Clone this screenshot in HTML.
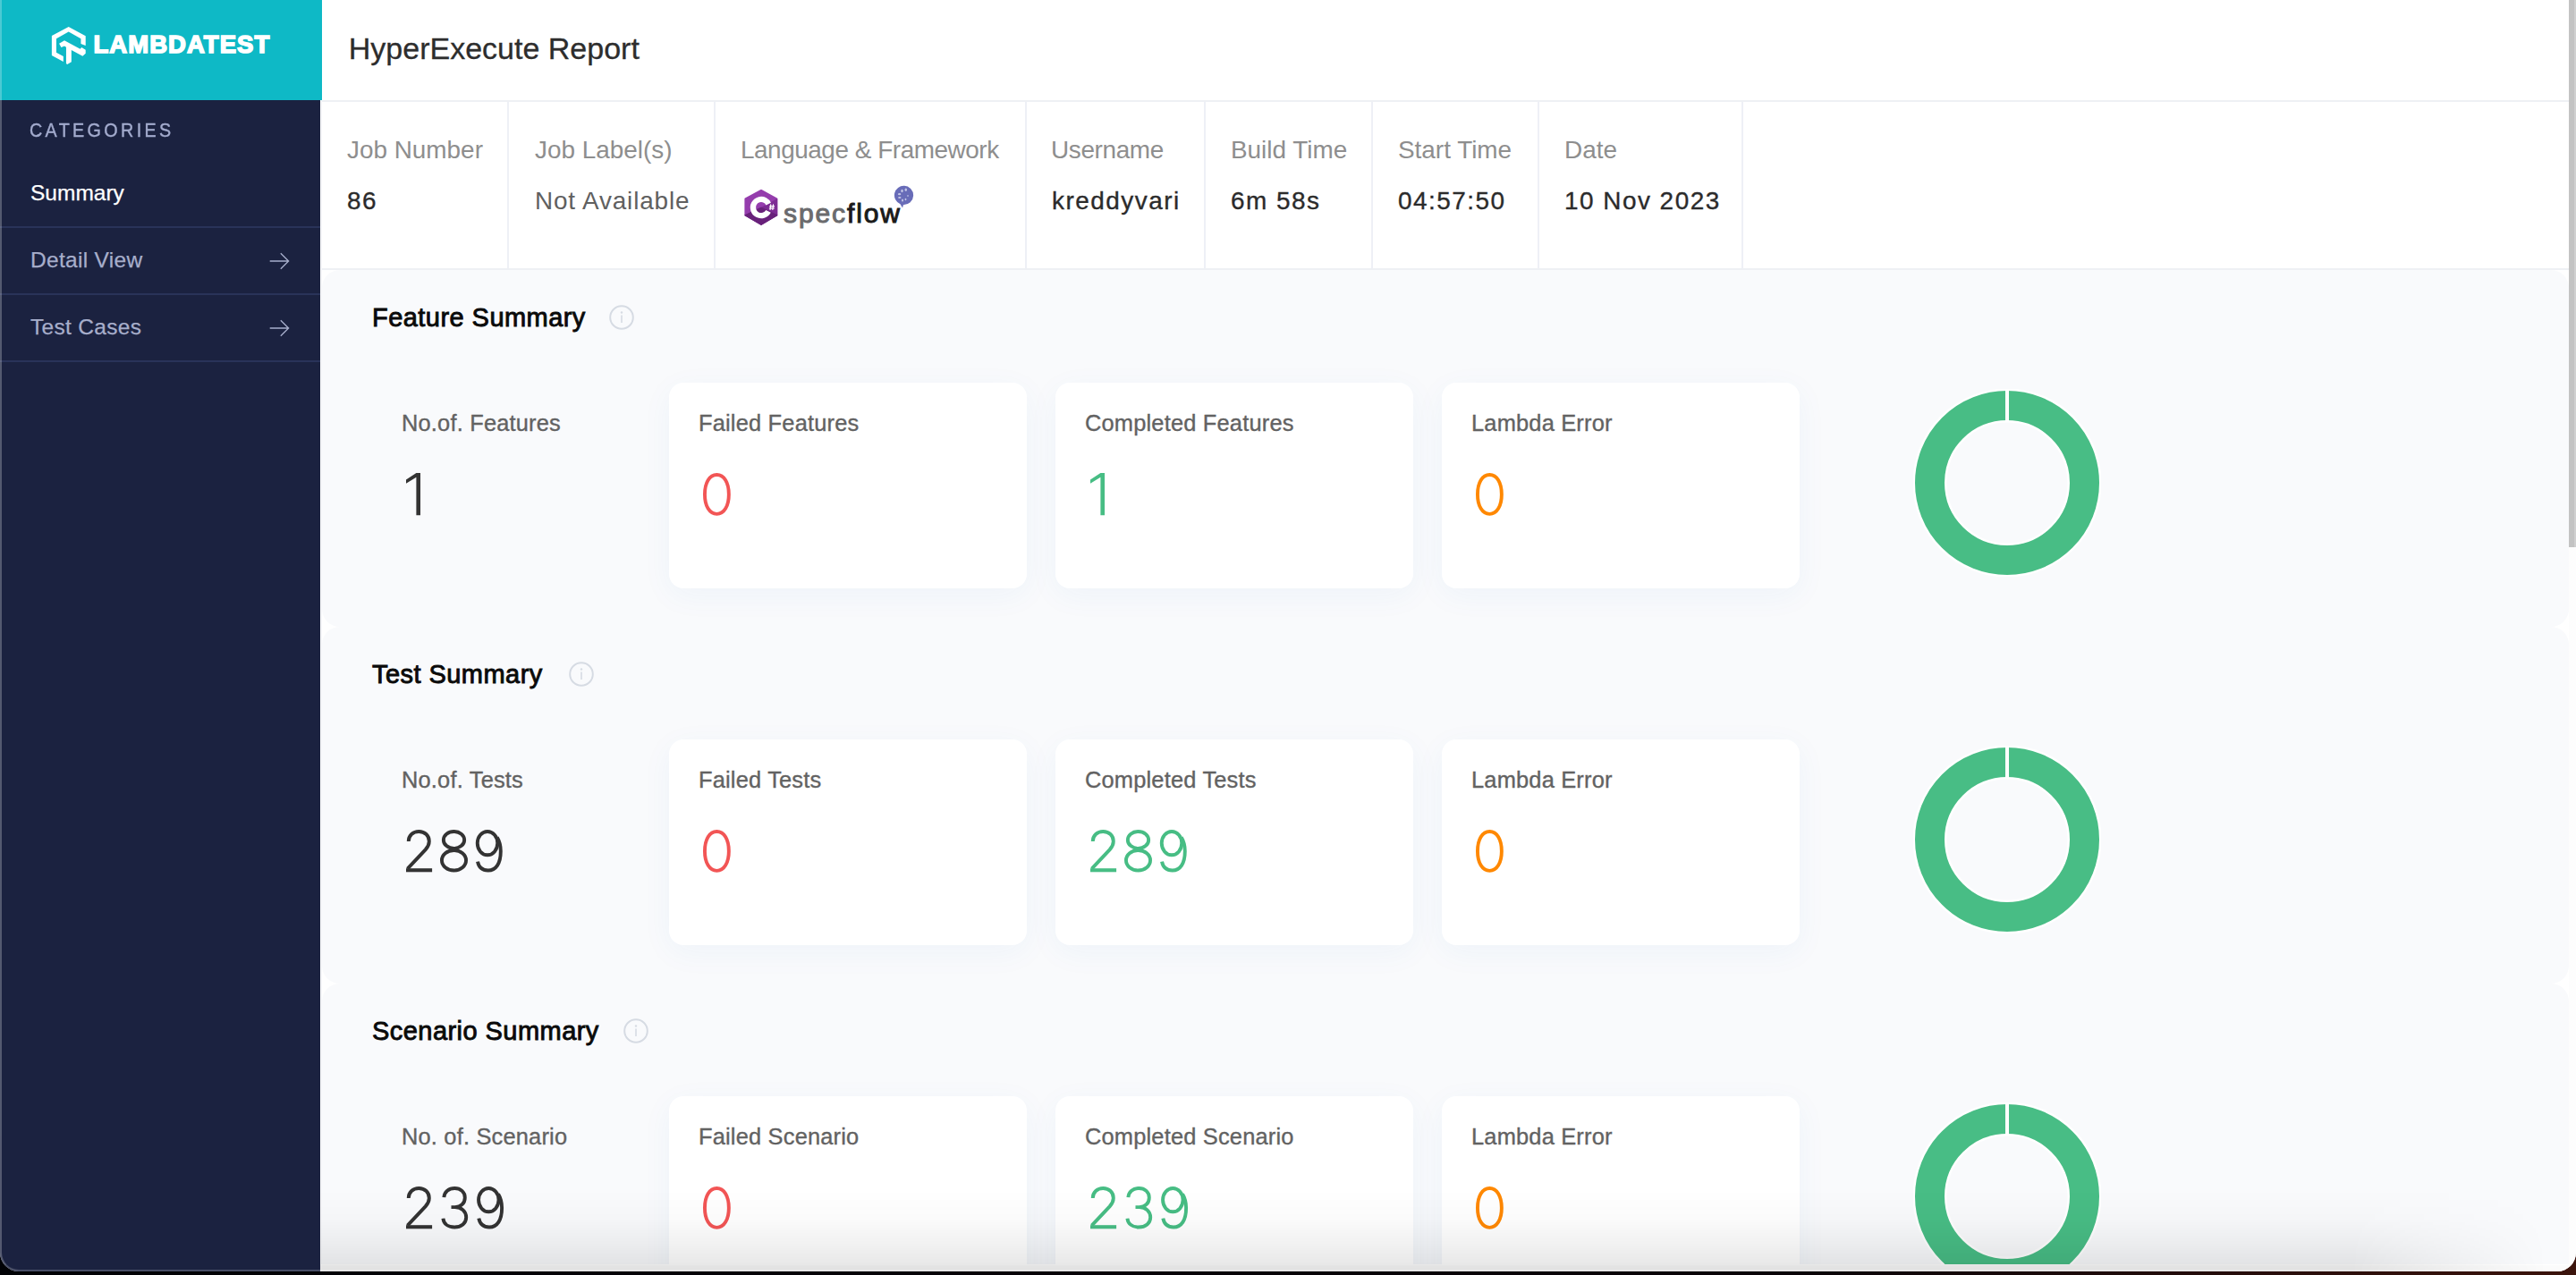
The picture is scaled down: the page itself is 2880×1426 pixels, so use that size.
<!DOCTYPE html>
<html><head><meta charset="utf-8">
<style>
*{margin:0;padding:0;box-sizing:border-box}
html,body{width:2880px;height:1426px;overflow:hidden;background:linear-gradient(to right,#020306 0%,#0a0408 70%,#3c140c 100%);font-family:"Liberation Sans",sans-serif}
.win{position:absolute;left:0;top:0;width:2880px;height:1422px;border-radius:0 0 21px 21px;overflow:hidden;background:#fff}
.abs{position:absolute;white-space:nowrap}
.teal{position:absolute;left:0;top:0;width:360px;height:112px;background:#0eb9c6;z-index:2}
.side{position:absolute;left:0;top:112px;width:358px;height:1310px;background:#1b2240}
.sline{position:absolute;left:0;width:358px;height:2px;background:#293359}
.main{position:absolute;left:358px;top:0;width:2514px;height:1414px;overflow:hidden;background:#fff}
.hdrline{position:absolute;left:2px;top:112px;width:2512px;height:2px;background:#eef0f4}
.infoline{position:absolute;left:2px;top:300px;width:2512px;height:2px;background:#eef0f4}
.vsep{position:absolute;top:114px;width:2px;height:186px;background:#eef0f6}
.lbl{position:absolute;margin-top:1px;font-size:27.9px;line-height:27.9px;color:#8e8e8e;white-space:nowrap}
.val{position:absolute;margin-top:1.2px;letter-spacing:1.5px;font-size:27.9px;line-height:27.9px;color:#2b2b2b;white-space:nowrap;-webkit-text-stroke:0.35px #2b2b2b}
.panel{position:absolute;left:2px;width:2512px;height:399px;background:#f9fafc;border-radius:20px}
.h2{position:absolute;font-size:29px;line-height:29px;letter-spacing:0.45px;font-weight:400;-webkit-text-stroke:0.9px #0a0a0a;color:#0a0a0a;white-space:nowrap}
.info{position:absolute;width:28px;height:28px}
.card{position:absolute;width:400px;height:230px;background:#fff;border-radius:16px;box-shadow:0 8px 34px rgba(40,120,200,0.05)}
.clbl{position:absolute;font-size:25.4px;line-height:25.4px;color:#626262;white-space:nowrap;letter-spacing:0.2px;-webkit-text-stroke:0.35px #626262}
.num{position:absolute;font-size:68px;line-height:68px;white-space:nowrap;letter-spacing:1.5px}
.donut{position:absolute;width:210px;height:210px}
.shade{position:absolute;left:0;top:1340px;width:2514px;height:74px;background:linear-gradient(rgba(0,0,0,0),rgba(0,0,0,0.085))}
</style></head><body>
<div class="win">
  <!-- sidebar -->
  <div class="teal"></div>
  <svg class="abs" style="left:52px;top:26px;z-index:3" width="50" height="50" viewBox="0 0 1275 1275">
    <path fill="#fff" d="M630 100 L1115 365 L1115 635 L980 585 L980 440 L630 245 L280 440 L280 835 L480 945 L480 1095 L150 920 L150 360 Z"/>
    <path fill="#fff" d="M360 580 L510 490 L960 730 L1000 690 L1115 760 L1115 860 L1030 935 L710 765 L710 1100 L590 1170 L560 1150 L560 680 L510 650 L420 690 Z"/>
  </svg>
  <div class="abs" id="logo" style="z-index:3;left:104.5px;top:36px;font-size:27.5px;line-height:27.5px;font-weight:700;color:#fff;letter-spacing:1.04px;-webkit-text-stroke:1.6px #fff">LAMBDATEST</div>
  <div class="side">
    <div class="abs" style="left:33px;top:22.8px;font-size:21.7px;line-height:21.7px;color:#a3abcd;letter-spacing:3.69px;transform:scaleX(0.91);transform-origin:0 0;-webkit-text-stroke:0.4px #a3abcd">CATEGORIES</div>
    <div class="abs" style="left:34px;top:92px;font-size:24.5px;line-height:24px;color:#ffffff;-webkit-text-stroke:0.25px #fff">Summary</div>
    <div class="sline" style="top:141px"></div>
    <div class="abs" style="left:34px;top:167px;font-size:24.5px;line-height:24px;color:#a7aecb;letter-spacing:0.3px;-webkit-text-stroke:0.25px #a7aecb">Detail View</div>
    <svg class="abs" style="left:300px;top:169.4px" width="26" height="22" viewBox="0 0 26 22"><path d="M1.7 11 H22.6 M13.8 2.3 L22.6 11 L13.8 19.7" fill="none" stroke="#a7aecb" stroke-width="1.35"/></svg>
    <div class="sline" style="top:216px"></div>
    <div class="abs" style="left:34px;top:242px;font-size:24.5px;line-height:24px;color:#a7aecb;letter-spacing:0.3px;-webkit-text-stroke:0.25px #a7aecb">Test Cases</div>
    <svg class="abs" style="left:300px;top:243.9px" width="26" height="22" viewBox="0 0 26 22"><path d="M1.7 11 H22.6 M13.8 2.3 L22.6 11 L13.8 19.7" fill="none" stroke="#a7aecb" stroke-width="1.35"/></svg>
    <div class="sline" style="top:291px"></div>
  </div>

  <!-- main -->
  <div class="main">
    <div class="abs" style="left:1px;top:112px;width:1px;height:1302px;background:#f1f2f6"></div>
    <div class="abs" id="title" style="left:31.8px;top:37.1px;font-size:34px;line-height:34px;color:#2d2d2d;-webkit-text-stroke:0.3px #2d2d2d">HyperExecute Report</div>
    <div class="hdrline"></div>
    <div class="infoline"></div>
    <div class="vsep" style="left:209px"></div>
    <div class="vsep" style="left:440px"></div>
    <div class="vsep" style="left:788px"></div>
    <div class="vsep" style="left:988px"></div>
    <div class="vsep" style="left:1175px"></div>
    <div class="vsep" style="left:1361px"></div>
    <div class="vsep" style="left:1589px"></div>

    <div class="lbl" style="left:30px;top:153.4px">Job Number</div>
    <div class="val" style="left:30px;top:210.1px">86</div>
    <div class="lbl" style="left:240px;top:153.4px">Job Label(s)</div>
    <div class="val" style="left:240px;top:210.1px;color:#606060;-webkit-text-stroke:0;letter-spacing:0.85px">Not Available</div>
    <div class="lbl" style="left:470px;top:153.4px;letter-spacing:-0.45px">Language &amp; Framework</div>
    <!-- csharp + specflow logo -->
    <svg class="abs" style="left:470px;top:208px" width="46" height="48" viewBox="0 0 46 48">
      <path d="M23 5 L40.3 14.4 L40.3 32.3 L23 42.7 L5.4 32.3 L5.4 14.4 Z" fill="#953dad" stroke="#953dad" stroke-width="2" stroke-linejoin="round"/>
      <path d="M23 24.1 L41.2 14 L41.2 32.8 Z" fill="#7d2c93"/>
      <path d="M4.6 32.8 L23 24.1 L41.2 32.8 L23 43.6 Z" fill="#68217a" stroke="#68217a" stroke-width="1" stroke-linejoin="round"/>
      <circle cx="23" cy="24.1" r="9.1" fill="none" stroke="#fff" stroke-width="6.2" stroke-dasharray="48.3 8.9" transform="rotate(28 23 24.1)"/>
      <path d="M33.8 20.4 L33 27 M36.6 20.4 L35.8 27 M32.2 22.6 H38 M31.9 24.9 H37.7" stroke="#fff" stroke-width="1.1" fill="none"/>
    </svg>
    <div class="abs" style="left:518px;top:223.8px;font-size:30px;line-height:30px;font-weight:400;color:#6b6b6e;letter-spacing:1.9px;-webkit-text-stroke:1px #6b6b6e">spec<span style="color:#1a1a1a;-webkit-text-stroke:1px #1a1a1a">flow</span></div>
    <svg class="abs" style="left:640px;top:206px" width="26" height="28" viewBox="0 0 26 28">
      <path d="M13 1.8 A10.6 10.6 0 1 1 12 23 L11 26.5 L8.5 22.2 A10.6 10.6 0 0 1 13 1.8Z" fill="#686cb8"/>
      <g fill="#c3c6e6"><ellipse cx="10.5" cy="7.5" rx="1.2" ry="1.7"/><ellipse cx="14.8" cy="6.3" rx="1.2" ry="1.7"/><ellipse cx="7.6" cy="11.2" rx="1.7" ry="1.1"/><ellipse cx="7.8" cy="15" rx="1.7" ry="1.1"/><ellipse cx="11" cy="18" rx="1" ry="1.5"/><ellipse cx="14.5" cy="17" rx="0.9" ry="1.3"/><ellipse cx="17" cy="13" rx="1" ry="0.8"/></g>
    </svg>
    <div class="lbl" style="left:817px;top:153.4px;letter-spacing:-0.35px">Username</div>
    <div class="val" style="left:818px;top:210.1px">kreddyvari</div>
    <div class="lbl" style="left:1018px;top:153.4px">Build Time</div>
    <div class="val" style="left:1018px;top:210.1px">6m 58s</div>
    <div class="lbl" style="left:1205px;top:153.4px">Start Time</div>
    <div class="val" style="left:1205px;top:210.1px">04:57:50</div>
    <div class="lbl" style="left:1391px;top:153.4px">Date</div>
    <div class="val" style="left:1391px;top:210.1px">10 Nov 2023</div>

    <!-- SECTIONS -->
    <div id="sections"><div class="panel" style="top:302px"></div>
<div class="h2" style="left:58px;top:340.8px">Feature Summary</div>
<svg class="info" style="left:323px;top:341px" viewBox="0 0 28 28"><circle cx="14" cy="14" r="12.8" fill="none" stroke="#d6dbe3" stroke-width="2"/><circle cx="14" cy="8.5" r="1.2" fill="#d6dbe3"/><rect x="13.2" y="11.5" width="1.6" height="8.5" fill="#d6dbe3"/></svg>
<div class="clbl" style="left:91px;top:460.6px">No.of. Features</div>
<svg class="abs" style="left:94.30px;top:526.70px;overflow:visible" width="124" height="52" viewBox="-2 -2 124 52"><g fill="none" stroke="#333333" stroke-width="3.9" style="fill:none"><g style="fill:#333333"><g transform="translate(0.00 0)"><path stroke="none" d="M11.4 0 L16 0 L16 47.3 L11.4 47.3 L11.4 4.8 L0 11.8 L0 7.6 Z"/></g></g></g></svg>
<div class="card" style="left:390px;top:427.6px"></div>
<div class="clbl" style="left:423px;top:460.6px">Failed Features</div>
<svg class="abs" style="left:426.20px;top:526.70px;overflow:visible" width="124" height="52" viewBox="-2 -2 124 52"><g fill="none" stroke="#f25555" stroke-width="3.9" style="fill:none"><g style="fill:#f25555"><g transform="translate(0.00 0)"><path style="fill:none" d="M15.4 1.95 C23.47 1.95 28.85 10.73 28.85 23.9 C28.85 37.07 23.47 45.85 15.4 45.85 C7.33 45.85 1.95 37.07 1.95 23.9 C1.95 10.73 7.33 1.95 15.4 1.95 Z"/></g></g></g></svg>
<div class="card" style="left:822px;top:427.6px"></div>
<div class="clbl" style="left:855px;top:460.6px">Completed Features</div>
<svg class="abs" style="left:858.80px;top:526.70px;overflow:visible" width="124" height="52" viewBox="-2 -2 124 52"><g fill="none" stroke="#47bd84" stroke-width="3.9" style="fill:none"><g style="fill:#47bd84"><g transform="translate(0.00 0)"><path stroke="none" d="M11.4 0 L16 0 L16 47.3 L11.4 47.3 L11.4 4.8 L0 11.8 L0 7.6 Z"/></g></g></g></svg>
<div class="card" style="left:1254px;top:427.6px"></div>
<div class="clbl" style="left:1287px;top:460.6px">Lambda Error</div>
<svg class="abs" style="left:1290.20px;top:526.70px;overflow:visible" width="124" height="52" viewBox="-2 -2 124 52"><g fill="none" stroke="#ff8800" stroke-width="3.9" style="fill:none"><g style="fill:#ff8800"><g transform="translate(0.00 0)"><path style="fill:none" d="M15.4 1.95 C23.47 1.95 28.85 10.73 28.85 23.9 C28.85 37.07 23.47 45.85 15.4 45.85 C7.33 45.85 1.95 37.07 1.95 23.9 C1.95 10.73 7.33 1.95 15.4 1.95 Z"/></g></g></g></svg>
<svg class="donut" style="left:1781px;top:435px" viewBox="0 0 210 210"><circle cx="105" cy="105" r="86.5" fill="none" stroke="#fff" stroke-width="38"/><circle cx="105" cy="105" r="86.5" fill="none" stroke="#48bd85" stroke-width="33"/><rect x="103" y="0" width="4" height="37" fill="#fff"/></svg>
<div class="panel" style="top:701px"></div>
<div class="h2" style="left:58px;top:739.8px">Test Summary</div>
<svg class="info" style="left:278px;top:740px" viewBox="0 0 28 28"><circle cx="14" cy="14" r="12.8" fill="none" stroke="#d6dbe3" stroke-width="2"/><circle cx="14" cy="8.5" r="1.2" fill="#d6dbe3"/><rect x="13.2" y="11.5" width="1.6" height="8.5" fill="#d6dbe3"/></svg>
<div class="clbl" style="left:91px;top:859.6px">No.of. Tests</div>
<svg class="abs" style="left:94.30px;top:925.70px;overflow:visible" width="124" height="52" viewBox="-2 -2 124 52"><g fill="none" stroke="#333333" stroke-width="3.9" style="fill:none"><g style="fill:#333333"><g transform="translate(0.00 0)"><path style="fill:none" d="M2.75 12.9 C2.75 6.3 7.8 1.95 14.3 1.95 C20.9 1.95 25.8 6.4 25.8 12.9 C25.8 16.5 24.3 19.4 21.6 22.4 L1.6 43.6"/><rect stroke="none" x="0" y="43.2" width="29.1" height="4.1"/></g><g transform="translate(38.00 0)"><ellipse style="fill:none" cx="15.5" cy="11.4" rx="11.65" ry="9.45"/><ellipse style="fill:none" cx="15.5" cy="34.3" rx="13.55" ry="11.25"/></g><g transform="translate(77.80 0)"><ellipse style="fill:none" cx="13.2" cy="15.1" rx="11.25" ry="13.15"/><path style="fill:none" d="M24 8.5 C26.8 13 28 18 28 24 C28 37.5 22.8 45.55 13.9 45.55 C7.6 45.55 3.4 41.8 2.2 35.7"/></g></g></g></svg>
<div class="card" style="left:390px;top:826.6px"></div>
<div class="clbl" style="left:423px;top:859.6px">Failed Tests</div>
<svg class="abs" style="left:426.20px;top:925.70px;overflow:visible" width="124" height="52" viewBox="-2 -2 124 52"><g fill="none" stroke="#f25555" stroke-width="3.9" style="fill:none"><g style="fill:#f25555"><g transform="translate(0.00 0)"><path style="fill:none" d="M15.4 1.95 C23.47 1.95 28.85 10.73 28.85 23.9 C28.85 37.07 23.47 45.85 15.4 45.85 C7.33 45.85 1.95 37.07 1.95 23.9 C1.95 10.73 7.33 1.95 15.4 1.95 Z"/></g></g></g></svg>
<div class="card" style="left:822px;top:826.6px"></div>
<div class="clbl" style="left:855px;top:859.6px">Completed Tests</div>
<svg class="abs" style="left:858.80px;top:925.70px;overflow:visible" width="124" height="52" viewBox="-2 -2 124 52"><g fill="none" stroke="#47bd84" stroke-width="3.9" style="fill:none"><g style="fill:#47bd84"><g transform="translate(0.00 0)"><path style="fill:none" d="M2.75 12.9 C2.75 6.3 7.8 1.95 14.3 1.95 C20.9 1.95 25.8 6.4 25.8 12.9 C25.8 16.5 24.3 19.4 21.6 22.4 L1.6 43.6"/><rect stroke="none" x="0" y="43.2" width="29.1" height="4.1"/></g><g transform="translate(38.00 0)"><ellipse style="fill:none" cx="15.5" cy="11.4" rx="11.65" ry="9.45"/><ellipse style="fill:none" cx="15.5" cy="34.3" rx="13.55" ry="11.25"/></g><g transform="translate(77.80 0)"><ellipse style="fill:none" cx="13.2" cy="15.1" rx="11.25" ry="13.15"/><path style="fill:none" d="M24 8.5 C26.8 13 28 18 28 24 C28 37.5 22.8 45.55 13.9 45.55 C7.6 45.55 3.4 41.8 2.2 35.7"/></g></g></g></svg>
<div class="card" style="left:1254px;top:826.6px"></div>
<div class="clbl" style="left:1287px;top:859.6px">Lambda Error</div>
<svg class="abs" style="left:1290.20px;top:925.70px;overflow:visible" width="124" height="52" viewBox="-2 -2 124 52"><g fill="none" stroke="#ff8800" stroke-width="3.9" style="fill:none"><g style="fill:#ff8800"><g transform="translate(0.00 0)"><path style="fill:none" d="M15.4 1.95 C23.47 1.95 28.85 10.73 28.85 23.9 C28.85 37.07 23.47 45.85 15.4 45.85 C7.33 45.85 1.95 37.07 1.95 23.9 C1.95 10.73 7.33 1.95 15.4 1.95 Z"/></g></g></g></svg>
<svg class="donut" style="left:1781px;top:834px" viewBox="0 0 210 210"><circle cx="105" cy="105" r="86.5" fill="none" stroke="#fff" stroke-width="38"/><circle cx="105" cy="105" r="86.5" fill="none" stroke="#48bd85" stroke-width="33"/><rect x="103" y="0" width="4" height="37" fill="#fff"/></svg>
<div class="panel" style="top:1100px"></div>
<div class="h2" style="left:58px;top:1138.8px">Scenario Summary</div>
<svg class="info" style="left:339px;top:1139px" viewBox="0 0 28 28"><circle cx="14" cy="14" r="12.8" fill="none" stroke="#d6dbe3" stroke-width="2"/><circle cx="14" cy="8.5" r="1.2" fill="#d6dbe3"/><rect x="13.2" y="11.5" width="1.6" height="8.5" fill="#d6dbe3"/></svg>
<div class="clbl" style="left:91px;top:1258.6px">No. of. Scenario</div>
<svg class="abs" style="left:94.30px;top:1324.70px;overflow:visible" width="124" height="52" viewBox="-2 -2 124 52"><g fill="none" stroke="#333333" stroke-width="3.9" style="fill:none"><g style="fill:#333333"><g transform="translate(0.00 0)"><path style="fill:none" d="M2.75 12.9 C2.75 6.3 7.8 1.95 14.3 1.95 C20.9 1.95 25.8 6.4 25.8 12.9 C25.8 16.5 24.3 19.4 21.6 22.4 L1.6 43.6"/><rect stroke="none" x="0" y="43.2" width="29.1" height="4.1"/></g><g transform="translate(39.20 0)"><path style="fill:none" d="M3.15 12.1 C3.6 6 8.5 1.95 15.1 1.95 C21.7 1.95 26.6 6.2 26.6 12.4 C26.6 18.8 21.8 23.1 15.5 23.1 L11.3 23.1 M15.5 23.1 C22.8 23.1 28 28 28 34.5 C28 41 22.6 45.55 14.8 45.55 C7.6 45.55 2.9 41.6 2.2 35.7"/></g><g transform="translate(79.10 0)"><ellipse style="fill:none" cx="13.2" cy="15.1" rx="11.25" ry="13.15"/><path style="fill:none" d="M24 8.5 C26.8 13 28 18 28 24 C28 37.5 22.8 45.55 13.9 45.55 C7.6 45.55 3.4 41.8 2.2 35.7"/></g></g></g></svg>
<div class="card" style="left:390px;top:1225.6px"></div>
<div class="clbl" style="left:423px;top:1258.6px">Failed Scenario</div>
<svg class="abs" style="left:426.20px;top:1324.70px;overflow:visible" width="124" height="52" viewBox="-2 -2 124 52"><g fill="none" stroke="#f25555" stroke-width="3.9" style="fill:none"><g style="fill:#f25555"><g transform="translate(0.00 0)"><path style="fill:none" d="M15.4 1.95 C23.47 1.95 28.85 10.73 28.85 23.9 C28.85 37.07 23.47 45.85 15.4 45.85 C7.33 45.85 1.95 37.07 1.95 23.9 C1.95 10.73 7.33 1.95 15.4 1.95 Z"/></g></g></g></svg>
<div class="card" style="left:822px;top:1225.6px"></div>
<div class="clbl" style="left:855px;top:1258.6px">Completed Scenario</div>
<svg class="abs" style="left:858.80px;top:1324.70px;overflow:visible" width="124" height="52" viewBox="-2 -2 124 52"><g fill="none" stroke="#47bd84" stroke-width="3.9" style="fill:none"><g style="fill:#47bd84"><g transform="translate(0.00 0)"><path style="fill:none" d="M2.75 12.9 C2.75 6.3 7.8 1.95 14.3 1.95 C20.9 1.95 25.8 6.4 25.8 12.9 C25.8 16.5 24.3 19.4 21.6 22.4 L1.6 43.6"/><rect stroke="none" x="0" y="43.2" width="29.1" height="4.1"/></g><g transform="translate(39.20 0)"><path style="fill:none" d="M3.15 12.1 C3.6 6 8.5 1.95 15.1 1.95 C21.7 1.95 26.6 6.2 26.6 12.4 C26.6 18.8 21.8 23.1 15.5 23.1 L11.3 23.1 M15.5 23.1 C22.8 23.1 28 28 28 34.5 C28 41 22.6 45.55 14.8 45.55 C7.6 45.55 2.9 41.6 2.2 35.7"/></g><g transform="translate(79.10 0)"><ellipse style="fill:none" cx="13.2" cy="15.1" rx="11.25" ry="13.15"/><path style="fill:none" d="M24 8.5 C26.8 13 28 18 28 24 C28 37.5 22.8 45.55 13.9 45.55 C7.6 45.55 3.4 41.8 2.2 35.7"/></g></g></g></svg>
<div class="card" style="left:1254px;top:1225.6px"></div>
<div class="clbl" style="left:1287px;top:1258.6px">Lambda Error</div>
<svg class="abs" style="left:1290.20px;top:1324.70px;overflow:visible" width="124" height="52" viewBox="-2 -2 124 52"><g fill="none" stroke="#ff8800" stroke-width="3.9" style="fill:none"><g style="fill:#ff8800"><g transform="translate(0.00 0)"><path style="fill:none" d="M15.4 1.95 C23.47 1.95 28.85 10.73 28.85 23.9 C28.85 37.07 23.47 45.85 15.4 45.85 C7.33 45.85 1.95 37.07 1.95 23.9 C1.95 10.73 7.33 1.95 15.4 1.95 Z"/></g></g></g></svg>
<svg class="donut" style="left:1781px;top:1233px" viewBox="0 0 210 210"><circle cx="105" cy="105" r="86.5" fill="none" stroke="#fff" stroke-width="38"/><circle cx="105" cy="105" r="86.5" fill="none" stroke="#48bd85" stroke-width="33"/><rect x="103" y="0" width="4" height="37" fill="#fff"/></svg></div><!--/sections-->
    
  </div>
  <!-- bottom strip of main -->
  <div class="abs" style="left:358px;top:1414px;width:2522px;height:8px;background:#fbfbfb;border-top:1px solid #ffffff"></div>
  <div class="abs" style="left:358px;top:1330px;width:2522px;height:92px;background:linear-gradient(rgba(0,0,0,0) 0%,rgba(0,0,0,0.015) 35%,rgba(0,0,0,0.05) 65%,rgba(0,0,0,0.1) 100%);-webkit-mask-image:linear-gradient(to right,#000 0px,#000 2270px,rgba(0,0,0,0) 2490px)"></div>
  <!-- scrollbar -->
  <div class="abs" style="left:2872px;top:0;width:8px;height:1422px;background:#fdfdfd"></div>
  <div class="abs" style="left:2872px;top:0;width:8px;height:612px;background:#c3c3c3;border-right:2px solid #d0d0d0"></div>
  <!-- window border overlay -->
  <div class="abs" style="z-index:5;left:0;top:0;width:2880px;height:1422px;border-radius:0 0 21px 21px;border-left:2px solid rgba(255,255,255,0.25);border-bottom:2px solid rgba(255,255,255,0.2)"></div>
</div>
</body></html>
